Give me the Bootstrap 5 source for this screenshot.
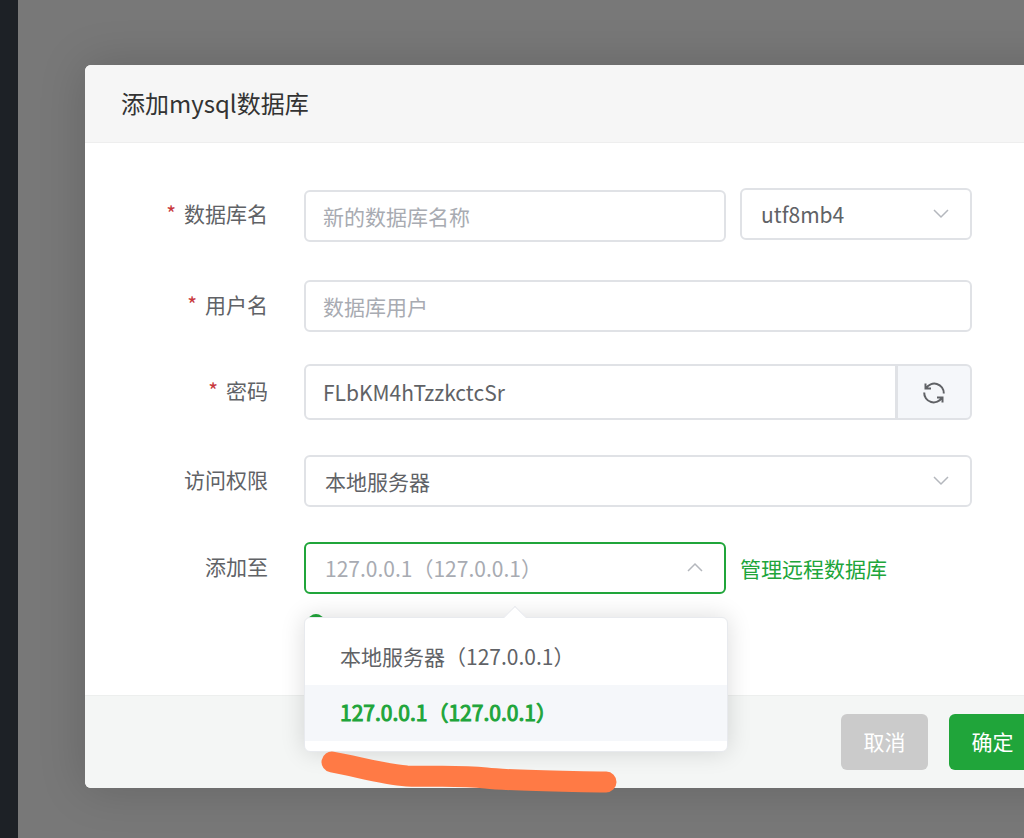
<!DOCTYPE html>
<html lang="zh-CN">
<head>
<meta charset="utf-8">
<meta name="viewport" content="width=device-width, initial-scale=1">
<title>添加mysql数据库</title>
<link href="https://cdn.jsdelivr.net/npm/bootstrap@5.3.0/dist/css/bootstrap.min.css" rel="stylesheet">
<style>
  :root { --green: #20a53a; --line: #e0e2e6; --ink: #606266; }
  body { font-family: "Noto Sans CJK SC", sans-serif; font-size: 21px; line-height: 32px; color: var(--ink); background: #787878; }
  .side-strip { width: 18px; background: #1d2126; }
  .stage { padding: 65px 0 50px 67px; }
  /* the dialog is wider than the window and runs past its right edge */
  .dialog { margin-right: -48px; border-radius: 6px; background: #fff; box-shadow: 0 0 48px rgba(0,0,0,.16); }
  .dialog-head { padding: 21px 36px 23px; background: #f6f6f6; border-bottom: 1px solid #eee; border-radius: 6px 6px 0 0; }
  .dialog-head h1 { font-size: 24px; line-height: 33px; font-weight: 400; color: #333; }
  .dialog-main { padding: 45px 100px 66px 0; }
  .dialog-foot { padding: 18px 36px; gap: 21px; background: #f4f6f5; border-top: 1px solid #edefee; border-radius: 0 0 6px 6px; }
  .line { margin-bottom: 35px; }
  .line-loose { margin-bottom: 38px; }
  .line-tight { margin-bottom: 32px; }
  .line-label { width: 183px; margin-right: 36px; padding-bottom: 4px; text-align: right; flex: none; }
  .req { color: #c8373c; margin-right: 8px; }
  .form-control, .form-select { height: 52px; padding: 0 17px; font-size: 21px; line-height: 32px; color: var(--ink); border: 2px solid var(--line); border-radius: 6px; background-color: #fff; }
  .form-select { padding: 0 19px; background-size: 18px 18px; background-position: right 20px center;
    background-image: url("data:image/svg+xml,%3Csvg xmlns='http://www.w3.org/2000/svg' viewBox='0 0 18 18'%3E%3Cpath d='M2 5l7 7 7-7' fill='none' stroke='%23b4b7bd' stroke-width='1.5'/%3E%3C/svg%3E"); }
  .form-control::placeholder { color: #a8abb2; opacity: 1; }
  .pair { gap: 14px; }
  .pair-side { width: 232px; flex: none; }
  .pair-low { margin-top: 2px; }
  .pass .form-control, .pass .btn { height: 56px; }
  .pass .btn { width: 76px; padding: 0; background: #f5f7fa; border: 2px solid var(--line); border-radius: 6px; color: var(--ink); }
  .input-group.pass > .btn { margin-left: -2px; }
  .select-open { border-color: var(--green); color: #a8abb2;
    background-image: url("data:image/svg+xml,%3Csvg xmlns='http://www.w3.org/2000/svg' viewBox='0 0 18 18'%3E%3Cpath d='M2 12l7-7 7 7' fill='none' stroke='%23b4b7bd' stroke-width='1.5'/%3E%3C/svg%3E"); }
  .green-link { color: var(--green); text-decoration: none; }
  .hint { top: 72px; left: 4px; }
  .hint-dot { width: 16px; height: 16px; border-radius: 50%; background: var(--green); }
  .drop { top: 75px; left: 0; right: -2px; z-index: 2; padding: 11px 0 10px; background: #fff; border: 1px solid #e8eaee; border-radius: 6px; box-shadow: 0 0 24px rgba(0,0,0,.14); }
  .drop::before { content: ""; position: absolute; left: 50%; top: -9px; width: 16px; height: 16px; margin-left: -9px; background: #fff; border: solid #e8eaee; border-width: 1px 0 0 1px; transform: rotate(45deg); }
  .drop button { height: 56px; padding: 0 35px 2px; border: 0; background: none; color: var(--ink); text-align: left; }
  .drop .picked { background: #f5f7fa; color: var(--green); -webkit-text-stroke: 1px var(--green); }
  .stroke-mark { left: 236px; top: 686px; z-index: 3; pointer-events: none; }
  .act { height: 56px; width: 87px; padding: 0; font-size: 21px; border: 0; border-radius: 6px; color: #fff; }
  .act-cancel { background: #cbcbcb; }
  .act-ok { background: var(--green); }
</style>
</head>
<body class="overflow-hidden">
<div class="d-flex min-vh-100">
  <aside class="side-strip flex-shrink-0"></aside>
  <main class="stage flex-grow-1">
    <section class="dialog position-relative" role="dialog" aria-labelledby="dlgTitle">
      <header class="dialog-head"><h1 id="dlgTitle" class="m-0">添加mysql数据库</h1></header>
      <form class="dialog-main">
        <div class="line line-loose d-flex align-items-center">
          <label class="line-label" for="dbName"><span class="req">*</span>数据库名</label>
          <div class="pair d-flex flex-grow-1">
            <input id="dbName" class="form-control pair-low" type="text" placeholder="新的数据库名称">
            <select class="form-select pair-side" aria-label="字符集"><option>utf8mb4</option></select>
          </div>
        </div>
        <div class="line line-tight d-flex align-items-center">
          <label class="line-label" for="dbUser"><span class="req">*</span>用户名</label>
          <input id="dbUser" class="form-control" type="text" placeholder="数据库用户">
        </div>
        <div class="line d-flex align-items-center">
          <label class="line-label" for="dbPass"><span class="req">*</span>密码</label>
          <div class="pass input-group">
            <input id="dbPass" class="form-control" type="text" value="FLbKM4hTzzkctcSr">
            <button class="btn" type="button" aria-label="刷新">
              <svg width="24" height="24" viewBox="0 0 24 24" fill="none" stroke="currentColor" stroke-width="2"><path d="M3.500 2.500V7.500H9M4 7.500A9.500 9.500 0 0 1 21.800 12.500M20.500 21.500V16.500H15M20 16.500A9.500 9.500 0 0 1 2.200 11.500"/></svg>
            </button>
          </div>
        </div>
        <div class="line d-flex align-items-center">
          <label class="line-label" for="dbAccess">访问权限</label>
          <select id="dbAccess" class="form-select"><option>本地服务器</option></select>
        </div>
        <div class="line d-flex align-items-center">
          <label class="line-label" for="dbHost">添加至</label>
          <div class="pair d-flex flex-grow-1 align-items-center">
            <div class="position-relative flex-grow-1">
              <select id="dbHost" class="form-select select-open"><option>127.0.0.1（127.0.0.1）</option></select>
              <div class="hint position-absolute"><div class="hint-dot"></div></div>
              <div class="drop position-absolute">
                <button type="button" class="d-block w-100">本地服务器（127.0.0.1）</button>
                <button type="button" class="picked d-block w-100">127.0.0.1（127.0.0.1）</button>
              </div>
            </div>
            <div class="pair-side"><a class="green-link" href="#">管理远程数据库</a></div>
          </div>
        </div>
      </form>
      <footer class="dialog-foot d-flex justify-content-end">
        <button type="button" class="btn act act-cancel">取消</button>
        <button type="button" class="btn act act-ok">确定</button>
      </footer>
      <svg class="stroke-mark position-absolute" width="298" height="44" viewBox="0 0 298 44" fill="none" stroke="#ff7a45" stroke-width="21" stroke-linecap="round" stroke-linejoin="round" aria-hidden="true"><path d="M11 11C35 15 60 23 86 25C115 26 138 24 165 27C190 30 240 30 285 31"/></svg>
    </section>
  </main>
</div>
<script src="https://cdn.jsdelivr.net/npm/bootstrap@5.3.0/dist/js/bootstrap.bundle.min.js"></script>
</body>
</html>
